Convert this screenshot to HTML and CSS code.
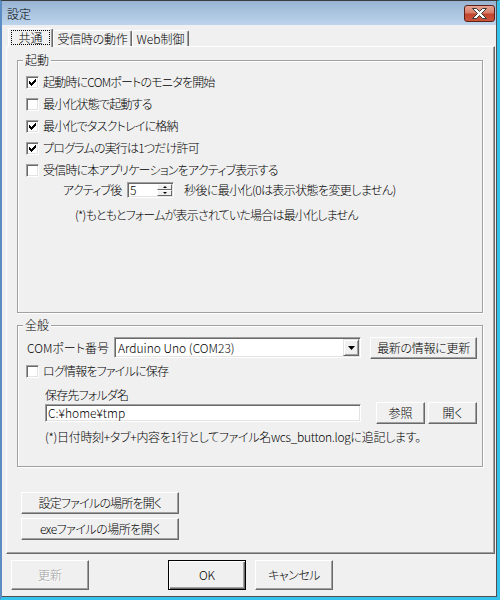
FILE: index.html
```html
<!DOCTYPE html>
<html lang="ja">
<head>
<meta charset="utf-8">
<title>設定</title>
<link rel="stylesheet" href="styles.css">
</head>
<body>
<div class="window">
  <div class="frame">
    <div class="titlebar">
      <span class="title">設定</span>
      <span class="close">
        <svg width="29" height="15" viewBox="0 0 29 15">
          <polygon points="0,0 4,0 7,3 10,0 14,0 9,5 14,10 10,10 7,7 4,10 0,10 5,5" transform="translate(7.5 2.5)" fill="#fff" stroke="#3a3a3a" stroke-width="1" stroke-linejoin="miter"/>
        </svg>
      </span>
    </div>
    <div class="client">
      <div class="tabs">
        <div class="tab tab-active"><span class="focus">共通</span></div>
        <div class="tab tab-recv">受信時の動作</div>
        <div class="tab tab-web">Web制御</div>
      </div>
      <div class="page">
        <div class="group group-start">
          <div class="group-title">起動</div>
          <div class="group-body">
            <div class="chk-row"><span class="cb"><svg class="check" width="9" height="9" viewBox="0 0 9 9"><polygon points="1,3 2,3 2,4 3,4 3,5 4,5 4,4 5,4 5,3 6,3 6,2 7,2 7,1 8,1 8,4 7,4 7,5 6,5 6,6 5,6 5,7 4,7 4,8 3,8 3,7 2,7 2,6 1,6" fill="#000"/></svg></span><span>起動時にCOMポートのモニタを開始</span></div>
            <div class="chk-row"><span class="cb"></span><span>最小化状態で起動する</span></div>
            <div class="chk-row"><span class="cb"><svg class="check" width="9" height="9" viewBox="0 0 9 9"><polygon points="1,3 2,3 2,4 3,4 3,5 4,5 4,4 5,4 5,3 6,3 6,2 7,2 7,1 8,1 8,4 7,4 7,5 6,5 6,6 5,6 5,7 4,7 4,8 3,8 3,7 2,7 2,6 1,6" fill="#000"/></svg></span><span>最小化でタスクトレイに格納</span></div>
            <div class="chk-row"><span class="cb"><svg class="check" width="9" height="9" viewBox="0 0 9 9"><polygon points="1,3 2,3 2,4 3,4 3,5 4,5 4,4 5,4 5,3 6,3 6,2 7,2 7,1 8,1 8,4 7,4 7,5 6,5 6,6 5,6 5,7 4,7 4,8 3,8 3,7 2,7 2,6 1,6" fill="#000"/></svg></span><span>プログラムの実行は1つだけ許可</span></div>
            <div class="chk-row"><span class="cb"></span><span>受信時に本アプリケーションをアクティブ表示する</span></div>
            <div class="spin-row">
              <span class="spin-label">アクティブ後</span>
              <span class="spin">
                <span class="spin-val">5</span>
                <span class="spin-btns">
                  <span class="spin-btn"><span class="arrow-up"></span></span>
                  <span class="spin-btn"><span class="arrow-down"></span></span>
                </span>
              </span>
              <span class="spin-after">秒後に最小化(0は表示状態を変更しません)</span>
            </div>
            <div class="note-row">(*)もともとフォームが表示されていた場合は最小化しません</div>
          </div>
        </div>

        <div class="group group-general">
          <div class="group-title">全般</div>
          <div class="group-body2">
            <div class="com-row">
              <span class="com-label">COMポート番号</span>
              <span class="combo">
                <span class="combo-text">Arduino Uno (COM23)</span>
                <span class="combo-btn"><svg width="7" height="4" viewBox="0 0 7 4"><polygon points="0,0 7,0 3.5,4" fill="#000"/></svg></span>
              </span>
              <span class="btn btn-refresh">最新の情報に更新</span>
            </div>
            <div class="chk-row log-row"><span class="cb"></span><span>ログ情報をファイルに保存</span></div>
            <div class="folder-label">保存先フォルダ名</div>
            <div class="folder-row">
              <span class="textbox">C:¥home¥tmp</span>
              <span class="btn btn-browse">参照</span>
              <span class="btn btn-open">開く</span>
            </div>
            <div class="log-note">(*)日付時刻+タブ+内容を1行としてファイル名wcs_button.logに追記します。</div>
          </div>
        </div>

        <div class="page-btns">
          <span class="btn btn-wide">設定ファイルの場所を開く</span>
          <span class="btn btn-wide btn-exe">exeファイルの場所を開く</span>
        </div>
      </div>
      <div class="footer">
        <span class="btn btn-foot btn-disabled">更新</span>
        <span class="btn btn-foot btn-default">OK</span>
        <span class="btn btn-foot btn-cancel">キャンセル</span>
      </div>
    </div>
  </div>
</div>
</body>
</html>
```
FILE: styles.css
```css
html, body {
  margin: 0;
  padding: 0;
}
body {
  width: 500px;
  height: 600px;
  overflow: hidden;
  font-family: "Noto Sans CJK JP", "Noto Sans", sans-serif;
  font-size: 12px;
  font-weight: 300;
  letter-spacing: -0.8px;
  font-feature-settings: "palt" 1;
  color: #000;
  background: #f0f0f0;
}

.window {
  width: 500px;
  height: 600px;
  box-sizing: border-box;
  border-top: 1px solid #3c3c3c;
  border-left: 2px solid #5b8cc4;
  border-right: 3px solid #35c2ec;
  border-bottom: 3px solid #35c2ec;
  display: flex;
  flex-direction: column;
}
.frame {
  flex: 1;
  display: flex;
  flex-direction: column;
  border-right: 1px solid #505050;
  border-bottom: 1px solid #505050;
}

/* title bar */
.titlebar {
  height: 24px;
  flex: none;
  display: flex;
  align-items: flex-start;
  justify-content: space-between;
  background: linear-gradient(#98b4d3, #bcd4ec);
}
.title {
  margin: 5px 0 0 5px;
  line-height: 16px;
  font-size: 12px;
  letter-spacing: 0;
}
.close {
  margin: 4px 1px 0 0;
  width: 31px;
  height: 17px;
  box-sizing: border-box;
  border: 1px solid #5e2118;
  border-radius: 3px;
  background: linear-gradient(#e6a596 0%, #d77e69 45%, #c3452e 55%, #c9553c 100%);
  display: flex;
  align-items: center;
  justify-content: center;
}
.close svg {
  display: block;
}

/* client area */
.client {
  flex: 1;
  background: #f0f0f0;
  display: flex;
  flex-direction: column;
}

/* tabs */
.tabs {
  margin-top: 3px;
  height: 18px;
  padding-left: 6px;
  display: flex;
  align-items: flex-end;
}
.tab {
  box-sizing: border-box;
  height: 16px;
  border-top: 1px solid #fff;
  border-left: 1px solid #fff;
  border-right: 1px solid #696969;
  box-shadow: inset -1px 0 0 #a0a0a0;
  border-radius: 2px 2px 0 0;
  text-align: center;
  line-height: 13px;
  padding-top: 1px;
  white-space: nowrap;
}
.tab-active {
  position: relative;
  z-index: 1;
  width: 45px;
  height: 19px;
  margin-bottom: -1px;
  background: #f0f0f0;
  padding: 1px 2px 0 2px;
}
.focus {
  display: block;
  border: 1px dotted #000;
  line-height: 13px;
  letter-spacing: 0;
}
.tab-recv {
  width: 79px;
  letter-spacing: -0.3px;
}
.tab-web {
  width: 57px;
  letter-spacing: 0;
}

/* tab page */
.page {
  margin-left: 4px;
  width: 489px;
  height: 508px;
  box-sizing: border-box;
  border-top: 1px solid #fff;
  border-left: 1px solid #fff;
  border-right: 1px solid #696969;
  border-bottom: 1px solid #696969;
  box-shadow: inset -1px -1px 0 #a0a0a0;
}

/* group boxes */
.group {
  box-sizing: border-box;
  margin-left: 10px;
  width: 466px;
  border: 1px solid #a0a0a0;
  box-shadow: 1px 1px 0 #fff, inset 1px 1px 0 #fff;
}
.group-start {
  margin-top: 13px;
  height: 253px;
}
.group-general {
  margin-top: 12px;
  height: 142px;
}
.group-title {
  width: max-content;
  margin: -8px 0 0 5px;
  padding: 0 2px;
  line-height: 14px;
  height: 14px;
  background: #f0f0f0;
  letter-spacing: 0;
}
.group-body {
  padding-top: 4px;
}

/* checkbox rows */
.chk-row {
  height: 22px;
  display: flex;
  align-items: center;
  padding-left: 8px;
  line-height: 14px;
  white-space: nowrap;
}
.cb {
  flex: none;
  width: 13px;
  height: 13px;
  box-sizing: border-box;
  border: 1px solid;
  border-color: #a0a0a0 #fff #fff #a0a0a0;
  box-shadow: inset 1px 1px 0 #696969, inset -1px -1px 0 #e3e3e3;
  background: #fff;
  margin-right: 4px;
}
.check {
  display: block;
  margin: 1px;
}

/* spinner row */
.spin-row {
  height: 18px;
  display: flex;
  align-items: center;
  padding-left: 45px;
  white-space: nowrap;
  line-height: 14px;
}
.spin-label {
  width: 64px;
}
.spin {
  width: 47px;
  height: 16px;
  box-sizing: border-box;
  border: 1px solid;
  border-color: #a0a0a0 #fff #fff #a0a0a0;
  box-shadow: inset 1px 1px 0 #696969, inset -1px -1px 0 #e3e3e3;
  background: #fff;
  padding: 1px;
  display: flex;
}
.spin-val {
  flex: 1;
  line-height: 12px;
  padding-left: 1px;
}
.spin-btns {
  width: 15px;
  display: flex;
  flex-direction: column;
}
.spin-btn {
  flex: 1;
  box-sizing: border-box;
  background: #f0f0f0;
  border: 1px solid;
  border-color: #fff #696969 #696969 #fff;
  display: flex;
  align-items: center;
  justify-content: center;
}
.arrow-up {
  width: 0;
  height: 0;
  border-left: 2px solid transparent;
  border-right: 2px solid transparent;
  border-bottom: 2px solid #000;
}
.arrow-down {
  width: 0;
  height: 0;
  border-left: 2px solid transparent;
  border-right: 2px solid transparent;
  border-top: 2px solid #000;
}
.spin-after {
  margin-left: 10px;
  letter-spacing: -0.6px;
}
.note-row {
  margin-top: 6px;
  height: 20px;
  line-height: 20px;
  padding-left: 57px;
  white-space: nowrap;
}

/* general group */
.com-row {
  margin-top: 5px;
  height: 22px;
  display: flex;
  align-items: flex-start;
  padding-left: 9px;
  white-space: nowrap;
}
.com-label {
  width: 87px;
  line-height: 21px;
  letter-spacing: 0;
}
.combo {
  width: 247px;
  height: 21px;
  box-sizing: border-box;
  border: 1px solid;
  border-color: #a0a0a0 #fff #fff #a0a0a0;
  box-shadow: inset 1px 1px 0 #696969, inset -1px -1px 0 #e3e3e3;
  background: #fff;
  padding: 1px;
  display: flex;
}
.combo-text {
  flex: 1;
  line-height: 17px;
  padding-left: 2px;
  letter-spacing: 0;
}
.combo-btn {
  width: 16px;
  box-sizing: border-box;
  background: #f0f0f0;
  border: 1px solid;
  border-color: #e3e3e3 #696969 #696969 #e3e3e3;
  box-shadow: inset 1px 1px 0 #fff, inset -1px -1px 0 #a0a0a0;
  display: flex;
  align-items: center;
  justify-content: center;
}
.combo-btn svg {
  display: block;
}

.btn {
  box-sizing: border-box;
  display: flex;
  align-items: center;
  justify-content: center;
  background: #f0f0f0;
  border: 1px solid;
  border-color: #fff #696969 #696969 #fff;
  box-shadow: inset -1px -1px 0 #a0a0a0;
  white-space: nowrap;
  line-height: 14px;
}
.btn-refresh {
  margin-left: 9px;
  width: 107px;
  height: 22px;
  letter-spacing: -0.3px;
}
.log-row {
  margin-top: 1px;
}
.folder-label {
  margin-top: 5px;
  line-height: 15px;
  padding-left: 27px;
}
.folder-row {
  height: 22px;
  display: flex;
  align-items: center;
  padding-left: 27px;
}
.textbox {
  width: 316px;
  height: 18px;
  box-sizing: border-box;
  border: 1px solid;
  border-color: #a0a0a0 #fff #fff #a0a0a0;
  box-shadow: inset 1px 1px 0 #696969, inset -1px -1px 0 #e3e3e3;
  background: #fff;
  padding: 1px 2px;
  line-height: 14px;
  letter-spacing: 0;
}
.btn-browse {
  margin-left: 15px;
  width: 49px;
  height: 22px;
  letter-spacing: 0;
}
.btn-open {
  margin-left: 3px;
  width: 49px;
  height: 22px;
  letter-spacing: 0;
}
.log-note {
  margin-top: 3px;
  line-height: 20px;
  padding-left: 27px;
  white-space: nowrap;
  letter-spacing: -0.3px;
}

/* page buttons */
.page-btns {
  margin: 25px 0 0 14px;
  display: flex;
  flex-direction: column;
  gap: 4px;
}
.btn-wide {
  width: 158px;
  height: 22px;
}
.btn-exe {
  letter-spacing: -0.5px;
}

/* footer */
.footer {
  margin-top: 6px;
  padding-left: 9px;
  display: flex;
}
.btn-foot {
  width: 78px;
  height: 30px;
  letter-spacing: 0;
}
.btn-disabled {
  color: #a0a0a0;
  text-shadow: 1px 1px 0 #fff;
}
.btn-default {
  margin-left: 79px;
  border: 1px solid #000;
  box-shadow: inset 1px 1px 0 #fff, inset -1px -1px 0 #696969, inset -2px -2px 0 #a0a0a0;
}
.btn-cancel {
  margin-left: 9px;
  letter-spacing: -0.5px;
}
```
